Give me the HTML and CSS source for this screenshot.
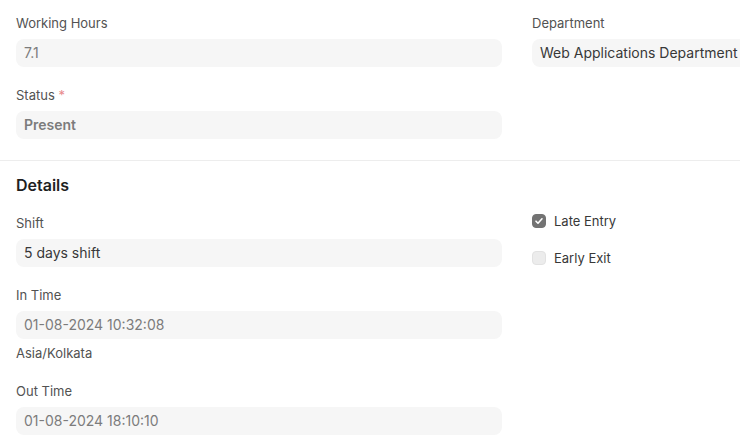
FILE: index.html
```html
<!DOCTYPE html>
<html lang="en">
<head>
  <meta charset="UTF-8">
  <meta name="viewport" content="width=device-width,initial-scale=1.0">
  <title>Attendance</title>
  <link rel="stylesheet" href="styles.css">
</head>
<body>
  <div class="form">
    <!-- top section -->
    <section class="section">
      <div class="columns">
        <div class="col">
          <div class="field">
            <div class="label">Working Hours</div>
            <div class="control muted">7.1</div>
          </div>
          <div class="field">
            <div class="label">Status <span class="req">*</span></div>
            <div class="control muted bold">Present</div>
          </div>
        </div>
        <div class="col">
          <div class="field">
            <div class="label">Department</div>
            <div class="control">Web Applications Department</div>
          </div>
        </div>
      </div>
    </section>

    <!-- details -->
    <section class="section">
      <h2 class="section-head">Details</h2>
      <div class="columns">
        <div class="col">
          <div class="field">
            <div class="label">Shift</div>
            <div class="control">5 days shift</div>
          </div>
          <div class="field">
            <div class="label">In Time</div>
            <div class="control muted">01-08-2024 10:32:08</div>
            <div class="desc">Asia/Kolkata</div>
          </div>
          <div class="field">
            <div class="label">Out Time</div>
            <div class="control muted">01-08-2024 18:10:10</div>
          </div>
        </div>
        <div class="col checks">
          <label class="check">
            <span class="box on">
              <svg viewBox="0 0 14 14" width="14" height="14"><path d="M4 7.2l2 2 4-4.4" fill="none" stroke="#fff" stroke-width="1.6" stroke-linecap="round" stroke-linejoin="round"/></svg>
            </span>
            Late Entry
          </label>
          <label class="check">
            <span class="box"></span>
            Early Exit
          </label>
        </div>
      </div>
    </section>
  </div>
</body>
</html>
```

FILE: styles.css
```css
*{box-sizing:border-box}
body{margin:0;overflow:hidden;background:#fff;color:#383838;font-family:Inter,"Noto Sans",sans-serif}
.form{width:1034px}
.section{padding:15px 16px 1px;border-bottom:1px solid #ededed}
.section:last-child{border-bottom:none}
.section-head{margin:-1px 0 20px;font-size:16px;line-height:20px;font-weight:600;color:#1f1f1f}
.columns{display:grid;grid-template-columns:486px 486px;column-gap:30px}
.field{margin-bottom:20px}
.label{font-size:13px;line-height:16px;color:#525252;margin-bottom:8px}
.req{color:#e8898b}
.control{height:28px;padding:0 8px;border-radius:8px;background:#f6f6f6;font-size:14px;line-height:28px;color:#383838;white-space:nowrap}
.control.muted{color:#7c7c7c}
.control.bold{font-weight:600}
.desc{margin-top:6px;padding-bottom:2px;font-size:13px;line-height:16px;color:#525252}
.checks{display:flex;flex-direction:column;gap:19px;margin-top:-3px}
.check{display:flex;align-items:center;gap:8px;height:18px;font-size:13px;color:#383838}
.box{width:14px;height:14px;border-radius:4px;background:#ececec;border:1px solid #e2e2e2;display:flex}
.box.on{background:#737373;border-color:#737373}
.box svg{margin:-1px}
```
